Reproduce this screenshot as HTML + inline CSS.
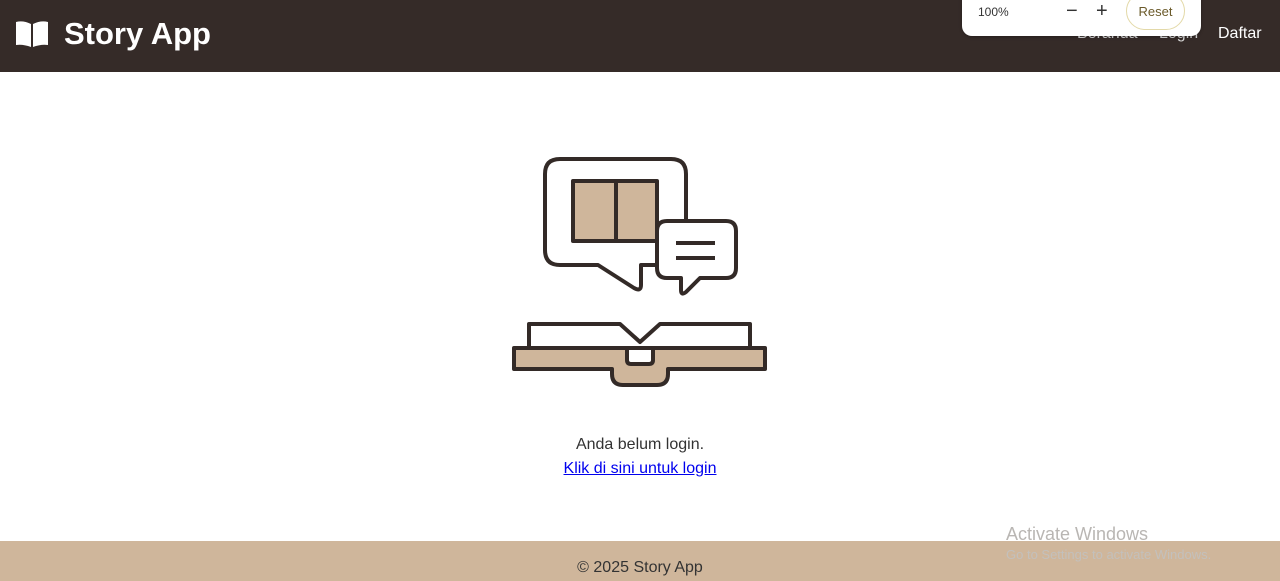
<!DOCTYPE html>
<html><head><meta charset="utf-8"><style>
*{margin:0;padding:0;box-sizing:border-box}
body{width:1280px;height:581px;overflow:hidden;background:#fff;font-family:"Liberation Sans",sans-serif;position:relative}
header{position:absolute;left:0;top:0;width:1280px;height:72px;background:#352b28}
.logo{position:absolute;left:14px;top:16px;color:#fff;font-weight:bold;font-size:31px;display:flex;align-items:center}
.logo svg{margin-right:14px}
.nav{position:absolute;top:25px;color:#fff;font-size:16px}
.zoom{position:absolute;left:962px;top:-2px;width:239px;height:38px;background:#fff;border-radius:0 0 10px 10px;box-shadow:0 1px 3px rgba(0,0,0,.3);font-size:12px;color:#333}
.reset{position:absolute;left:164px;top:-6px;width:59px;height:38px;border:1px solid #e3d9a8;border-radius:20px;text-align:center;line-height:38px;color:#6b5a2a;font-size:13px}
.msg{position:absolute;top:436px;width:1280px;text-align:center;font-size:16px;color:#333}
.lnk{position:absolute;top:460px;width:1280px;text-align:center;font-size:16px}
.lnk a{color:#0000ee}
footer{position:absolute;left:0;top:541px;width:1280px;height:40px;background:#cfb69b;text-align:center;font-size:16px;color:#333;padding-top:18px}
.aw{position:absolute;left:1006px;top:524px;color:#b9b6b3;font-size:18px}
.aw2{position:absolute;left:1006px;top:547px;color:#c3c0bc;font-size:13px}
</style></head><body>
<header>
<div class="logo"><svg width="36" height="30" viewBox="0 0 36 30"><path d="M2 3 Q9 1 17 5 V28 Q9 25 2 26 Z M19 5 Q27 1 34 3 V26 Q27 25 19 28 Z" fill="#fff"/></svg>Story App</div>
<div class="nav" style="left:1077px;color:#ddd">Beranda</div>
<div class="nav" style="left:1159px;color:#ddd">Login</div>
<div class="nav" style="left:1218px">Daftar</div>
<div class="zoom"><span style="position:absolute;left:16px;top:7px">100%</span><span style="position:absolute;left:104px;top:2px;font-size:20px">−</span><span style="position:absolute;left:134px;top:2px;font-size:20px">+</span><div class="reset">Reset</div></div>
</header>
<svg style="position:absolute;left:0;top:0" width="1280" height="581" viewBox="0 0 1280 581" fill="none" stroke="#332a27" stroke-width="4" stroke-linejoin="round">
<path d="M560 159 H671 Q686 159 686 174 V250 Q686 265 671 265 H641 V285 Q641 292 634 288 L598 265 H560 Q545 265 545 250 V174 Q545 159 560 159 Z" fill="#fff"/>
<rect x="573" y="181" width="84" height="60" fill="#cfb69b"/>
<line x1="616" y1="181" x2="616" y2="241"/>
<path d="M667 221 H726 Q736 221 736 231 V268 Q736 278 726 278 H700 L686 292 Q681 296 681 290 V278 H667 Q657 278 657 268 V231 Q657 221 667 221 Z" fill="#fff"/>
<line x1="676" y1="243" x2="715" y2="243"/><line x1="676" y1="258" x2="715" y2="258"/>
<path d="M529 324 H620 L640 342 L660 324 H750 V348 H529 Z" fill="#fff"/>
<path d="M514 348 H627 V360 Q627 364 631 364 H649 Q653 364 653 360 V348 H765 V369 H668 V374 Q668 385 657 385 H623 Q612 385 612 374 V369 H514 Z" fill="#cfb69b"/>
</svg>
<div class="msg">Anda belum login.</div>
<div class="lnk"><a href="#">Klik di sini untuk login</a></div>
<footer>© 2025 Story App</footer>
<div class="aw">Activate Windows</div>
<div class="aw2">Go to Settings to activate Windows.</div>
</body></html>
